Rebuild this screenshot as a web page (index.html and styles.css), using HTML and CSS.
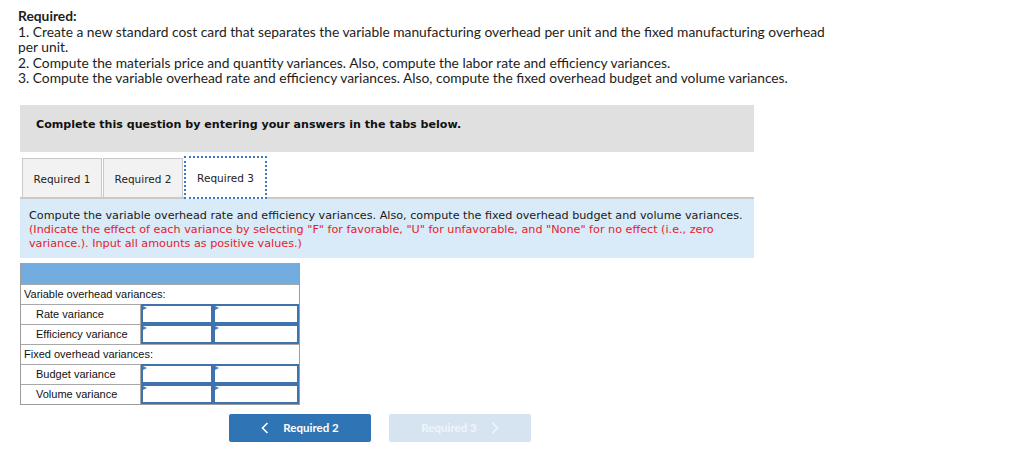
FILE: index.html
```html
<!DOCTYPE html>
<html>
<head>
<meta charset="utf-8">
<link rel="stylesheet" href="styles.css">
</head>
<body>
<div class="required">
  <div class="req-title">Required:</div>
  <div>1. Create a new standard cost card that separates the variable manufacturing overhead per unit and the fixed manufacturing overhead per unit.</div>
  <div>2. Compute the materials price and quantity variances. Also, compute the labor rate and efficiency variances.</div>
  <div>3. Compute the variable overhead rate and efficiency variances. Also, compute the fixed overhead budget and volume variances.</div>
</div>

<div class="complete-box">Complete this question by entering your answers in the tabs below.</div>

<div class="tabs">
  <div class="tab">Required 1</div>
  <div class="tab">Required 2</div>
  <div class="tab active">Required 3</div>
</div>

<div class="info">
  Compute the variable overhead rate and efficiency variances. Also, compute the fixed overhead budget and volume variances.
  <span class="red">(Indicate the effect of each variance by selecting "F" for favorable, "U" for unfavorable, and "None" for no effect (i.e., zero variance.). Input all amounts as positive values.)</span>
</div>

<div class="vtable">
  <div class="vrow head"></div>
  <div class="vrow section">Variable overhead variances:</div>
  <div class="vrow sub">
    <div class="label">Rate variance</div>
    <div class="inp w1"></div>
    <div class="inp w2"></div>
  </div>
  <div class="vrow sub">
    <div class="label">Efficiency variance</div>
    <div class="inp w1"></div>
    <div class="inp w2"></div>
  </div>
  <div class="vrow section">Fixed overhead variances:</div>
  <div class="vrow sub">
    <div class="label">Budget variance</div>
    <div class="inp w1"></div>
    <div class="inp w2"></div>
  </div>
  <div class="vrow sub">
    <div class="label">Volume variance</div>
    <div class="inp w1"></div>
    <div class="inp w2"></div>
  </div>
</div>

<div class="nav">
  <div class="btn prev"><svg class="chev" width="8" height="12" viewBox="0 0 8 12"><polyline points="6.5,1 1.5,6 6.5,11" fill="none" stroke="currentColor" stroke-width="1.6"/></svg>Required 2</div>
  <div class="btn next disabled">Required 3<svg class="chev" width="8" height="12" viewBox="0 0 8 12"><polyline points="1.5,1 6.5,6 1.5,11" fill="none" stroke="currentColor" stroke-width="1.6"/></svg></div>
</div>
</body>
</html>
```

FILE: styles.css
```css
* { box-sizing: border-box; }
body {
  margin: 0;
  background: #fff;
  font-family: Lato, "Open Sans", sans-serif;
  color: #1d1d1d;
}
.required {
  padding: 8px 0 0 18px;
  width: 838px;
  font-size: 13.8px;
  line-height: 15.5px;
}
.req-title { font-weight: bold; }

.complete-box {
  margin: 19px 0 0 20px;
  width: 734px;
  height: 47px;
  background: #e0e0e0;
  padding: 13px 0 0 16px;
  font-family: "DejaVu Sans", Verdana, sans-serif;
  font-weight: bold;
  font-size: 11.1px;
  line-height: 14px;
  color: #111;
}

.tabs {
  margin: 4px 0 0 20px;
  width: 734px;
  height: 43px;
  display: flex;
  align-items: flex-end;
  border-bottom: 2px solid #cacaca;
  padding-left: 2px;
  gap: 1px;
}
.tab {
  width: 80px;
  height: 39px;
  padding-top: 3px;
  background: #f2f2f2;
  border: 1px solid #c9c9c9;
  border-bottom: none;
  display: flex;
  align-items: center;
  justify-content: center;
  font-family: "DejaVu Sans", Verdana, sans-serif;
  font-size: 10.5px;
  color: #222;
}
.tab.active {
  width: 83px;
  height: 43px;
  padding-top: 2px;
  background: #fff;
  border: 2px dotted #3b79c2;
  margin-bottom: -2px;
}

.info {
  margin-left: 20px;
  width: 734px;
  background: #d9eaf8;
  padding: 10px 8px 7px 9px;
  font-family: "DejaVu Sans", Verdana, sans-serif;
  font-size: 11.2px;
  line-height: 14px;
  color: #1a1a1a;
}
.red { color: #e62129; }

.vtable {
  margin: 5px 0 0 20px;
  width: 280px;
  border: 1px solid #9c9c9c;
  border-top: none;
  font-family: "Liberation Sans", Arial, sans-serif;
  font-size: 11px;
  color: #111;
}
.vrow {
  display: flex;
  height: 20px;
  border-top: 1px solid #a8a8a8;
}
.vrow.head {
  height: 21px;
  background: #73ade0;
  border-top: 1px solid #8aa9c8;
}
.vrow.section {
  align-items: center;
  padding-left: 3px;
}
.label {
  width: 120px;
  padding-left: 15px;
  display: flex;
  align-items: center;
  border-right: 1px solid #a8a8a8;
}
.inp {
  position: relative;
  height: 20px;
  border: 2px solid #3f73ad;
  background: #fff;
  margin-top: -1px;
}
.inp::before {
  content: "";
  position: absolute;
  left: 0;
  top: 0;
  border-left: 4px solid #3c7fd0;
  border-top: 2.5px solid transparent;
  border-bottom: 2.5px solid transparent;
}
.w1 { width: 72px; }
.w2 { width: 86px; }

.nav {
  display: flex;
  gap: 18px;
  margin: 9px 0 0 229px;
}
.btn {
  width: 142px;
  height: 28px;
  border-radius: 2px;
  display: flex;
  align-items: center;
  justify-content: center;
  font-family: Lato, "Open Sans", sans-serif;
  font-weight: bold;
  font-size: 11.5px;
  color: #fff;
  background: #2f74b5;
}
.btn .chev { display: block; }
.prev .chev { margin-right: 14px; }
.next .chev { margin-left: 14px; }
.btn.disabled {
  background: #d6e4f2;
  color: #eef4fb;
}
```
